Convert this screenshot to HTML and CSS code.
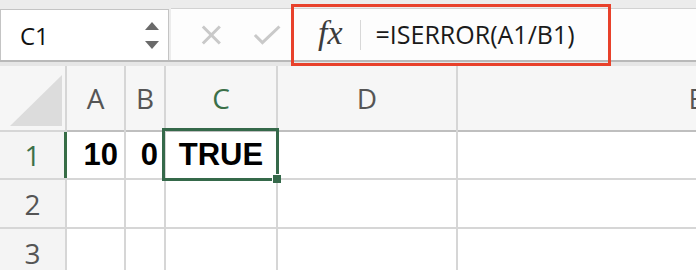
FILE: index.html
```html
<!DOCTYPE html>
<html lang="en">
<head>
    <meta charset="UTF-8">
    <title>ISERROR</title>
    <link rel="stylesheet" href="styles.css">
</head>
<body>
    <div class="toolbar">
        <div class="toolbar-row">
            <div class="namebox">
                <span class="cell-ref">C1</span>
                <div class="spinner">
                    <span class="arrow up"></span>
                    <span class="arrow down"></span>
                </div>
            </div>
            <div class="editbar">
                <div class="edit-buttons">
                    <svg class="edit-icon" width="24" height="24" viewBox="0 0 24 24">
                        <path d="M3 3 L21 21 M21 3 L3 21" stroke="#c9c9c9" stroke-width="3.2" fill="none"/>
                    </svg>
                    <svg class="edit-icon" width="30" height="24" viewBox="0 0 30 24">
                        <path d="M2 12 L10 20 L28 3" stroke="#c9c9c9" stroke-width="3.2" fill="none"/>
                    </svg>
                </div>
                <div class="formula">
                    <span class="fx">fx</span>
                    <span class="divider"></span>
                    <span class="formula-text">=ISERROR(A1/B1)</span>
                    <div class="highlight"></div>
                </div>
            </div>
        </div>
        <div class="band"></div>
    </div>

    <div class="sheet">
        <div class="corner"><span class="corner-mark"></span></div>
        <div class="col-head">A</div>
        <div class="col-head">B</div>
        <div class="col-head active">C</div>
        <div class="col-head">D</div>
        <div class="col-head last">E</div>

        <div class="row-head active">1</div>
        <div class="cell num">10</div>
        <div class="cell num">0</div>
        <div class="cell bool">TRUE</div>
        <div class="cell"></div>
        <div class="cell"></div>

        <div class="row-head">2</div>
        <div class="cell"></div>
        <div class="cell"></div>
        <div class="cell"></div>
        <div class="cell"></div>
        <div class="cell"></div>

        <div class="row-head">3</div>
        <div class="cell"></div>
        <div class="cell"></div>
        <div class="cell"></div>
        <div class="cell"></div>
        <div class="cell"></div>

        <div class="selection"><span class="fill-handle"></span></div>
    </div>
</body>
</html>
```

FILE: styles.css
```css
body {
    margin: 0;
    padding: 0;
    width: 696px;
    height: 270px;
    overflow: hidden;
    background: #fff;
    font-family: 'Open Sans', 'Liberation Sans', sans-serif;
}
.toolbar {
    background: #ececec;
    padding-top: 8px;
}
.toolbar-row {
    display: flex;
    height: 52px;
    border-bottom: 2px solid #b9b9b9;
}
.band {
    height: 4px;
    background: #e6e6e6;
}
.namebox {
    width: 167px;
    margin-top: 1px;
    background: #fff;
    border: 1px solid #c4c4c4;
    border-bottom: none;
    display: flex;
    align-items: center;
    justify-content: space-between;
}
.cell-ref {
    font-size: 24px;
    color: #111;
    padding-left: 19px;
}
.spinner {
    display: flex;
    flex-direction: column;
    gap: 11px;
    margin-right: 9px;
}
.arrow {
    width: 0;
    height: 0;
    border-left: 7px solid transparent;
    border-right: 7px solid transparent;
}
.arrow.up {
    border-bottom: 8px solid #6a6a6a;
}
.arrow.down {
    border-top: 8px solid #6a6a6a;
}
.editbar {
    flex: 1;
    margin-left: 2px;
    background: #fdfdfd;
    border-top: 1px solid #d2d2d2;
    display: flex;
    align-items: center;
}
.edit-buttons {
    box-sizing: border-box;
    display: flex;
    align-items: center;
    gap: 30px;
    padding-left: 29px;
    width: 110px;
}
.formula {
    position: relative;
    display: flex;
    align-items: center;
    height: 100%;
    margin-left: 10px;
    flex: 1;
}
.fx {
    font-family: 'Liberation Serif', serif;
    font-style: italic;
    font-size: 34px;
    color: #3c3c3c;
    margin-left: 27px;
    margin-top: -4px;
}
.divider {
    width: 1px;
    height: 30px;
    background: #d8d8d8;
    margin-left: 17px;
}
.formula-text {
    font-size: 25px;
    color: #1a1a1a;
    margin-left: 15px;
    margin-top: -2px;
}
.highlight {
    position: absolute;
    left: 0;
    top: -5px;
    width: 314px;
    height: 56px;
    border: 3px solid #e8412b;
}
.sheet {
    position: relative;
    display: grid;
    grid-template-columns: 65px 57px 38px 110px 178px 1fr;
    grid-template-rows: 64px 46px 47px 47px;
    gap: 2px;
    background: #d6d6d6;
}
.corner, .col-head {
    background: #f6f6f6;
}
.corner {
    position: relative;
}
.corner-mark {
    position: absolute;
    left: 10px;
    top: 9px;
    width: 52px;
    height: 51px;
    background: #dcdcdc;
    clip-path: polygon(100% 0, 100% 100%, 0 100%);
}
.col-head {
    display: flex;
    align-items: center;
    justify-content: center;
    font-size: 28px;
    color: #555;
    box-shadow: 0 2px 0 #bfbfbf;
}
.col-head.active {
    color: #3b7048;
}
.col-head.last {
    justify-content: flex-end;
    overflow: hidden;
    margin-right: -8px;
}
.row-head {
    display: flex;
    align-items: center;
    justify-content: center;
    background: #f4f4f4;
    font-size: 28px;
    color: #555;
}
.row-head.active {
    color: #3b7048;
    box-shadow: inset -1px 0 #376d46, 2px 0 #376d46;
}
.cell {
    background: #fff;
    font-family: 'Liberation Sans', Arial, sans-serif;
    font-weight: bold;
    font-size: 31px;
    color: #000;
    display: flex;
    align-items: center;
}
.cell.num {
    justify-content: flex-end;
    padding-right: 6px;
}
.cell.bool {
    justify-content: center;
}
.selection {
    position: absolute;
    left: 162px;
    top: 62px;
    width: 111px;
    height: 47px;
    border: 3px solid #35694a;
}
.fill-handle {
    position: absolute;
    right: -5px;
    bottom: -5px;
    width: 8px;
    height: 8px;
    background: #35694a;
    border-left: 1px solid #fff;
    border-top: 1px solid #fff;
}
```
